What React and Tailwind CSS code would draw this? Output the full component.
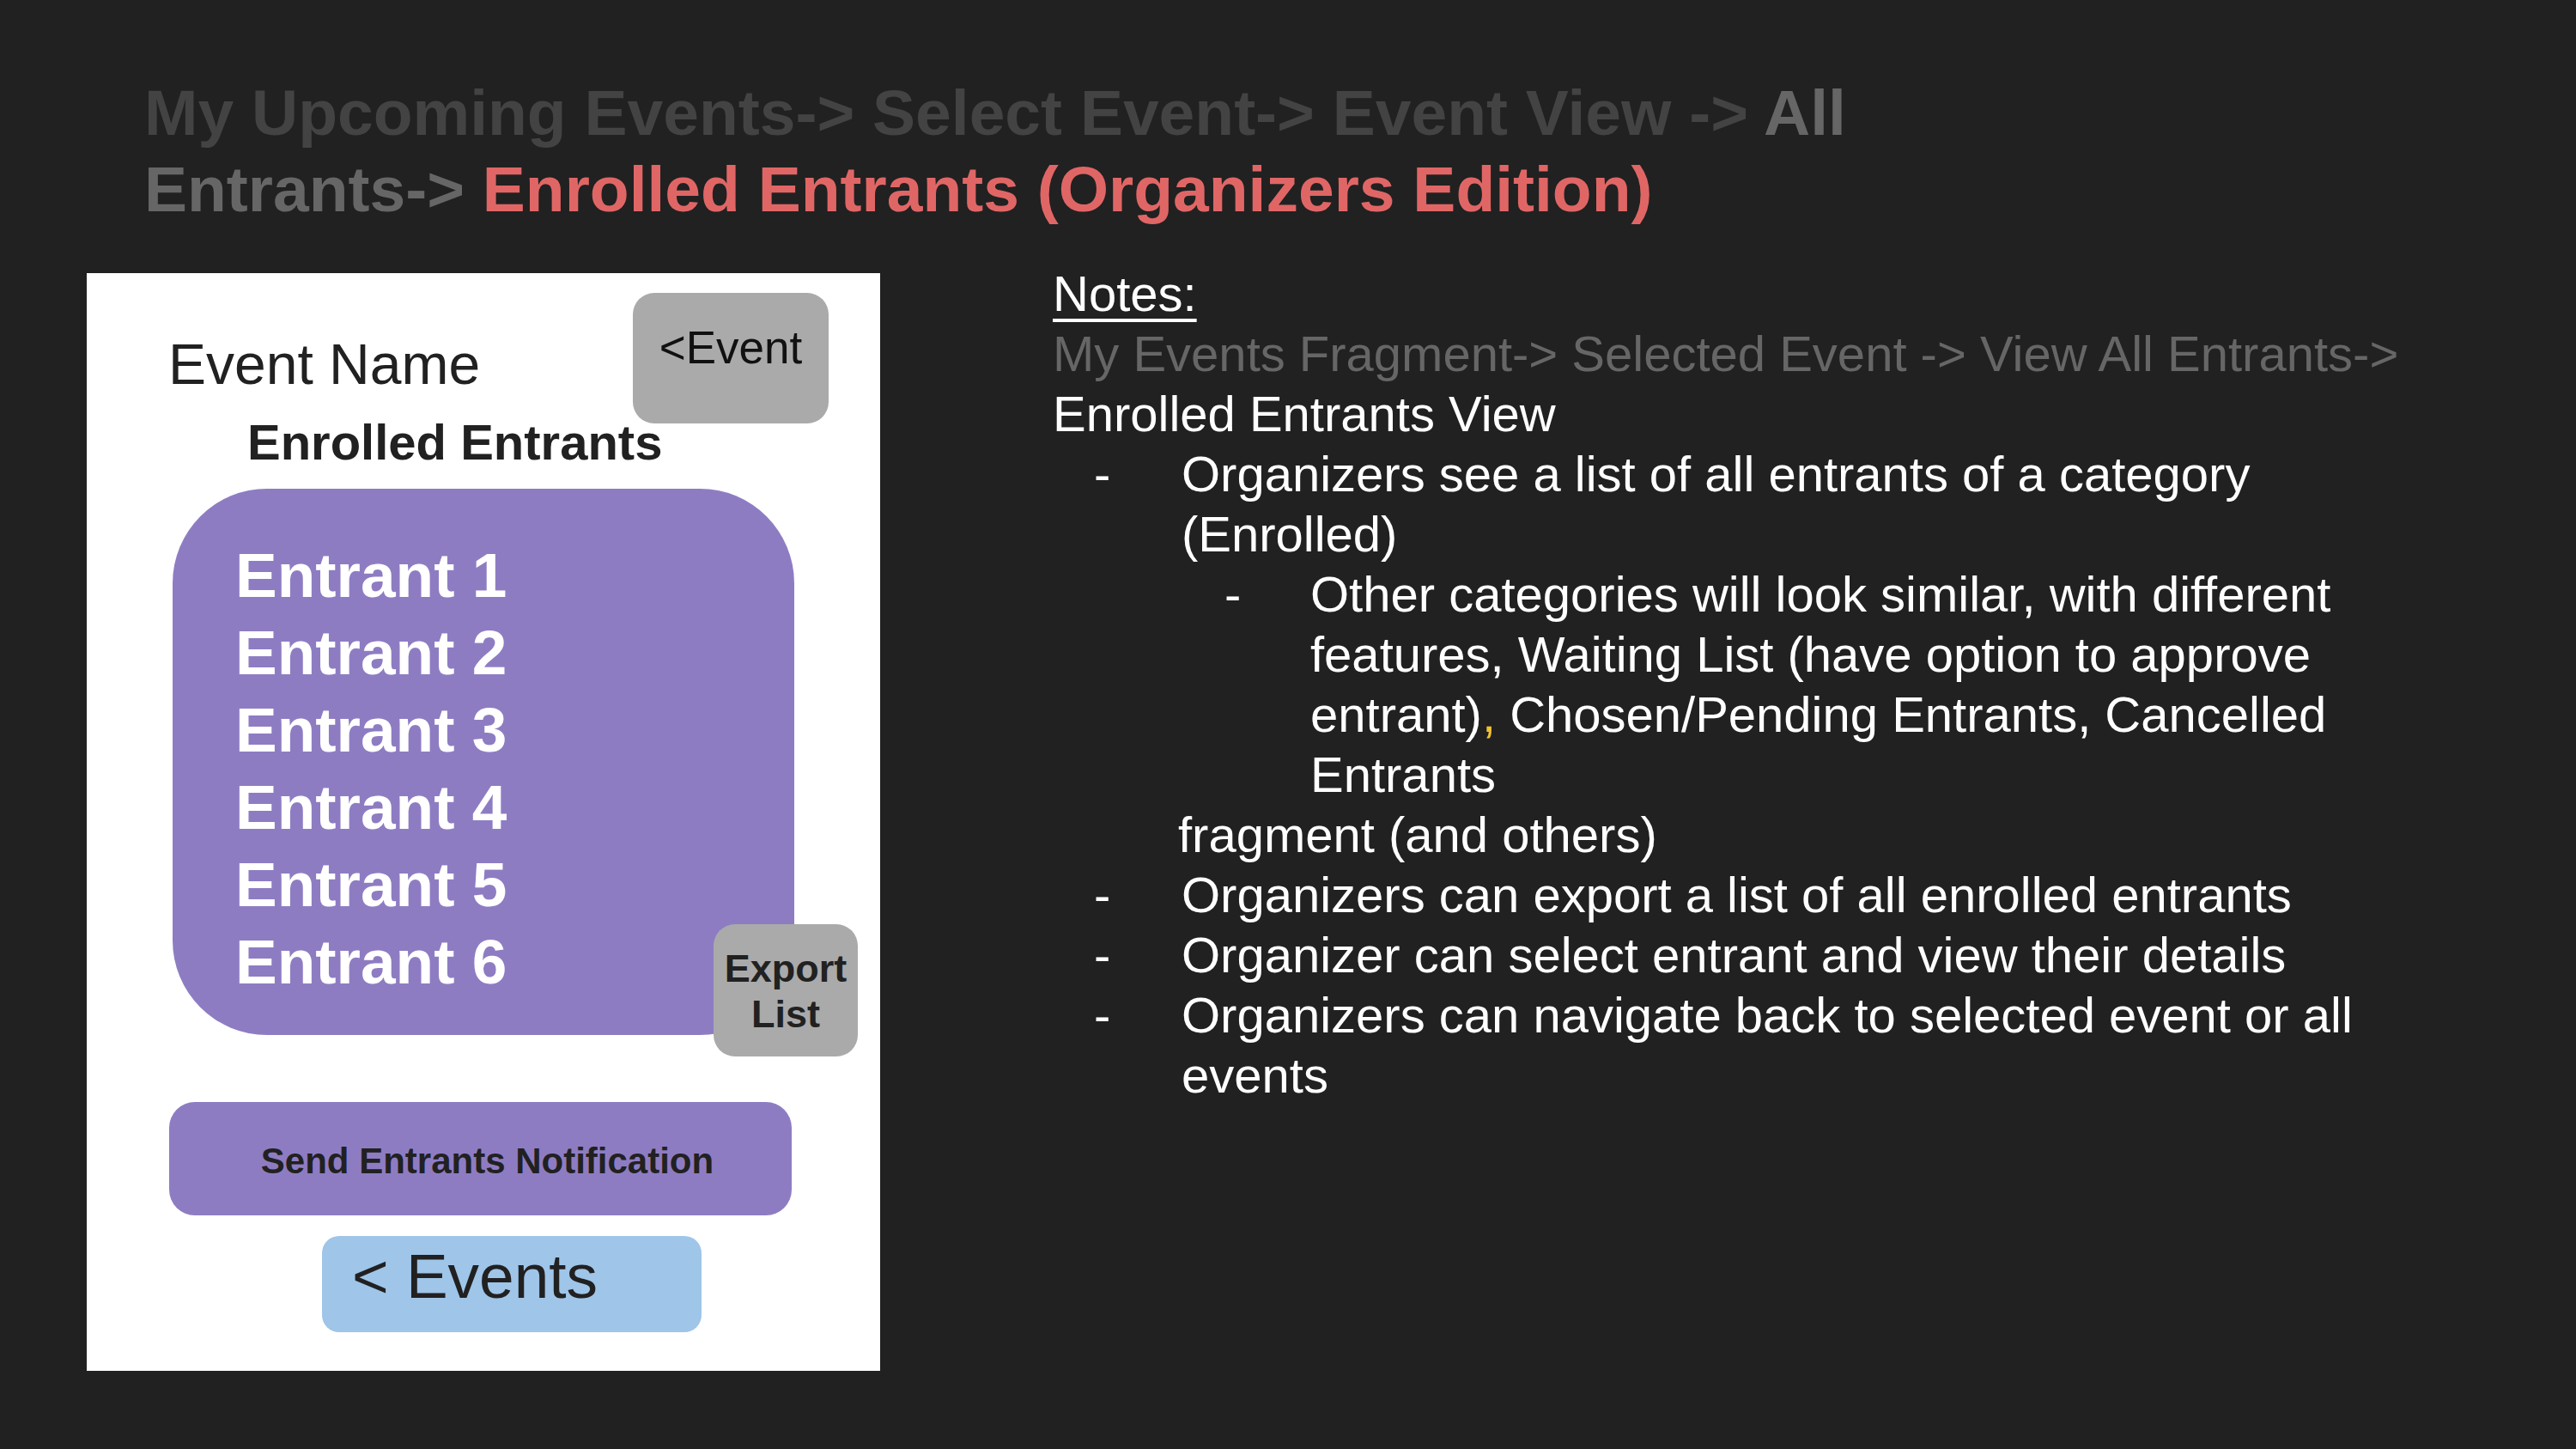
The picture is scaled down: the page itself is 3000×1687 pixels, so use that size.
import React from "react";

const entrants = ["Entrant 1", "Entrant 2", "Entrant 3", "Entrant 4", "Entrant 5", "Entrant 6"];

// Phone mock on the left
const PhoneMock = () => (
  <div className="relative mt-[11px] h-[1278px] w-[924px] shrink-0 bg-white pt-[23px] text-[#212121]">
    {/* Header: title + back-to-event button */}
    <div className="flex items-start">
      <div className="mt-[50px] whitespace-nowrap pl-[95px] text-[66px] leading-[66px]">Event Name</div>
      <div className="ml-auto mr-[60px] h-[152px] w-[228px] shrink-0 cursor-pointer rounded-[25px] bg-[#aaaaaa] pt-[37px] text-center text-[53px] leading-[53px] text-[#111]">
        &lt;Event
      </div>
    </div>
    <div className="-mt-[7px] whitespace-nowrap pl-[187px] text-[58px] font-bold leading-[58px]">Enrolled Entrants</div>

    {/* Entrant list */}
    <div className="ml-[100px] mt-[25px] h-[636px] w-[724px] rounded-[110px] bg-[#8e7cc3] pl-[73px] pt-[56px]">
      {entrants.map((name) => (
        <div key={name} className="text-[73px] font-bold leading-[90px] text-white">
          {name}
        </div>
      ))}
    </div>

    {/* Export button sits over the list's corner */}
    <div className="absolute left-[730px] top-[758px] h-[154px] w-[168px] cursor-pointer rounded-[25px] bg-[#aaaaaa] pt-[25px] text-center text-[45px] font-bold leading-[53px] text-[#212121]">
      Export
      <br />
      List
    </div>

    <div className="ml-[96px] mt-[78px] flex h-[132px] w-[725px] cursor-pointer items-center justify-center rounded-[30px] bg-[#8e7cc3] pl-[16px] pt-[6px] text-[42px] font-bold leading-[42px] text-[#212121]">
      Send Entrants Notification
    </div>

    <div className="ml-[274px] mt-[24px] h-[112px] w-[442px] cursor-pointer rounded-[20px] bg-[#9fc5e8] pl-[35px] pt-[10px] text-[73px] leading-[73px] text-[#212121]">
      &lt; Events
    </div>
  </div>
);

const Bullet = ({ children, nested = false }) => (
  <div className="flex">
    <span className={nested ? "w-[300px] shrink-0 pl-[200px]" : "w-[150px] shrink-0 pl-[48px]"}>-</span>
    <span className="flex-1">{children}</span>
  </div>
);

const App = () => {
  return (
    <div className="h-[1687px] w-full overflow-hidden bg-[#212121] font-['Liberation_Sans',Arial,sans-serif]">
      {/* Breadcrumb title */}
      <h1 className="ml-[168px] max-w-[2200px] pt-[87px] text-[75px] font-bold leading-[89px]">
        <span className="text-[#434343]">My Upcoming Events-&gt; Select Event-&gt; Event View -&gt; </span>
        <span className="text-[#666666]">All Entrants-&gt; </span>
        <span className="text-[#e06666]">Enrolled Entrants (Organizers Edition)</span>
      </h1>

      <div className="mt-[42px] flex pl-[101px]">
        <PhoneMock />

        {/* Notes */}
        <div className="ml-[201px] w-[1624px] text-[58px] leading-[70px] text-white">
          <div className="underline decoration-[4px] underline-offset-[9px]">Notes:</div>
          <div className="text-[#666666]">My Events Fragment-&gt; Selected Event -&gt; View All Entrants-&gt;</div>
          <div>Enrolled Entrants View</div>
          <Bullet>Organizers see a list of all entrants of a category (Enrolled)</Bullet>
          <Bullet nested>
            Other categories will look similar, with different features, Waiting List (have option to approve
            entrant)<span className="text-[#f1c232]">,</span> Chosen/Pending Entrants, Cancelled Entrants
          </Bullet>
          <div className="pl-[146px]">fragment (and others)</div>
          <Bullet>Organizers can export a list of all enrolled entrants</Bullet>
          <Bullet>Organizer can select entrant and view their details</Bullet>
          <Bullet>Organizers can navigate back to selected event or all events</Bullet>
        </div>
      </div>
    </div>
  );
};

export default App;
